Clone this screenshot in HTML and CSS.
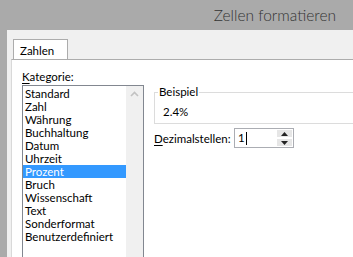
FILE: index.html
```html
<!DOCTYPE html>
<html lang="de">
<head>
  <meta charset="UTF-8" />
  <title>Zellen formatieren</title>
  <link rel="stylesheet" href="styles.css">
</head>
<body>

  <header class="titlebar">Zellen formatieren</header>

  <div class="window">
    <div class="tabs">
      <div class="tab">Zahlen</div>
    </div>

    <div class="panel">
      <div class="col-left">
        <div class="label"><u>K</u>ategorie:</div>
        <div class="listbox">
          <ul class="items">
            <li>Standard</li>
            <li>Zahl</li>
            <li>Währung</li>
            <li>Buchhaltung</li>
            <li>Datum</li>
            <li>Uhrzeit</li>
            <li class="selected">Prozent</li>
            <li>Bruch</li>
            <li>Wissenschaft</li>
            <li>Text</li>
            <li>Sonderformat</li>
            <li>Benutzerdefiniert</li>
          </ul>
          <div class="scrollbar">
            <svg width="17" height="17" viewBox="0 0 17 17">
              <path d="M5 10 L8.5 6.5 L12 10" fill="none" stroke="#c2c2c2" stroke-width="1.6"/>
            </svg>
          </div>
        </div>
      </div>

      <div class="col-right">
        <fieldset class="group">
          <legend>Beispiel</legend>
          <div class="sample">2.4%</div>
        </fieldset>

        <div class="field-row">
          <label><u>D</u>ezimalstellen:</label>
          <div class="spinner">
            <div class="spin-value">1<span class="caret"></span></div>
            <div class="spin-buttons">
              <div class="spin-btn">
                <svg width="7" height="4" viewBox="0 0 7 4"><path d="M0 4 L3.5 0 L7 4 Z" fill="#222"/></svg>
              </div>
              <div class="spin-btn">
                <svg width="7" height="4" viewBox="0 0 7 4"><path d="M0 0 L3.5 4 L7 0 Z" fill="#222"/></svg>
              </div>
            </div>
          </div>
        </div>
      </div>
    </div>
  </div>

</body>
</html>
```

FILE: styles.css
```css
body {
  margin: 0;
  padding: 0;
  background-color: #aaaaaa;
  font-family: Lato, "Liberation Sans", sans-serif;
  font-size: 11.5px;
  color: #000;
  height: 257px;
  overflow: hidden;
}
.titlebar {
  height: 30px;
  line-height: 30px;
  text-align: right;
  padding-right: 17px;
  font-family: Lato, sans-serif;
  font-weight: 300;
  font-size: 15.5px;
  color: #333;
}
.window {
  margin-left: 7px;
  background-color: #f0f0f0;
  padding: 9px 0 0 4px;
  height: 218px;
}
.tabs {
  display: flex;
  height: 20px;
}
.tab {
  margin-left: 2px;
  width: 55px;
  height: 20px;
  box-sizing: border-box;
  background: #fff;
  border: 1px solid #acacac;
  border-bottom: none;
  padding: 3px 0 0 6px;
  line-height: 16px;
}
.panel {
  background: #fff;
  border-top: 1px solid #acacac;
  border-left: 1px solid #d9d9d9;
  height: 188px;
  overflow: hidden;
  display: flex;
  padding: 9px 0 0 10px;
}
.col-left {
  width: 122px;
}
.label {
  line-height: 16px;
  height: 16px;
}
u {
  text-decoration-thickness: 1px;
  text-underline-offset: 2px;
}
.listbox {
  display: flex;
  border: 1px solid #828790;
  height: 180px;
  background: #fff;
}
.items {
  list-style: none;
  margin: 0;
  padding: 1px 0 0 0;
  flex: 1;
}
.items li {
  height: 13px;
  line-height: 13px;
  padding-left: 2px;
  white-space: nowrap;
}
.items li.selected {
  background-color: #3399ff;
  color: #fff;
}
.scrollbar {
  width: 17px;
  background: #f0f0f0;
}
.scrollbar svg {
  display: block;
}
.col-right {
  flex: 1;
  padding-left: 10px;
}
.group {
  margin: 16px 0 0 0;
  padding: 0 0 0 8px;
  border: 1px solid #dcdcdc;
  border-right: none;
  height: 39px;
  box-sizing: border-box;
}
.group legend {
  padding: 0 1px;
  margin-left: -5px;
  line-height: 14px;
}
.sample {
  line-height: 14px;
  padding-top: 6px;
}
.field-row {
  display: flex;
  align-items: center;
  margin-top: 4px;
}
.field-row label {
  width: 80px;
}
.spinner {
  display: flex;
  width: 60px;
  height: 20px;
  box-sizing: border-box;
  border: 1px solid #abadb3;
}
.spin-value {
  flex: 1;
  padding-left: 3px;
  line-height: 18px;
  display: flex;
  align-items: center;
}
.caret {
  display: inline-block;
  width: 1px;
  height: 13px;
  background: #000;
  margin-left: 1px;
}
.spin-buttons {
  width: 17px;
  display: flex;
  flex-direction: column;
}
.spin-btn {
  flex: 1;
  background: #e6e6e6;
  border: 1px solid #fff;
  display: flex;
  align-items: center;
  justify-content: center;
}
```
